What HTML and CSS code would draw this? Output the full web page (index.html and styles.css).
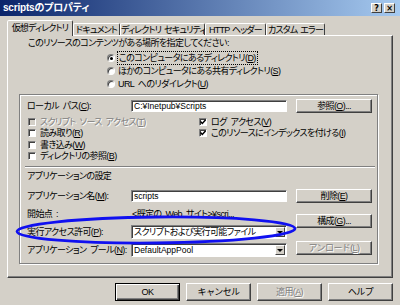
FILE: index.html
```html
<!DOCTYPE html>
<html lang="ja">
<head>
  <meta charset="UTF-8">
  <title>scriptsのプロパティ</title>
  <link rel="stylesheet" href="styles.css">
</head>
<body>

<!-- Title bar -->
<div class="titlebar">
  <span class="title">scriptsのプロパティ</span>
  <div class="caption-btns">
    <span class="cap-btn">?</span>
    <span class="cap-btn">×</span>
  </div>
</div>

<!-- Tabs -->
<div class="tabs">
  <div class="tab active">仮想ディレクトリ</div>
  <div class="tab">ドキュメント</div>
  <div class="tab">ディレクトリ セキュリティ</div>
  <div class="tab">HTTP ヘッダー</div>
  <div class="tab">カスタム エラー</div>
</div>

<div class="panel">
  <div class="intro">このリソースのコンテンツがある場所を指定してください:</div>
  <div class="radios">
    <div class="radio-row"><span class="radio checked"></span><span class="focus">このコンピュータにあるディレクトリ(<u>D</u>)</span></div>
    <div class="radio-row"><span class="radio"></span><span>ほかのコンピュータにある共有ディレクトリ(<u>S</u>)</span></div>
    <div class="radio-row"><span class="radio"></span><span>URL へのリダイレクト(<u>U</u>)</span></div>
  </div>

  <div class="group">
    <div class="path-row">
      <span class="label">ローカル パス(<u>C</u>):</span>
      <div class="textbox">C:¥Inetpub¥Scripts</div>
      <button class="btn">参照(<u>O</u>)...</button>
    </div>

    <div class="checks">
      <div class="check-col">
        <div class="check-row disabled"><span class="checkbox"></span>スクリプト ソース アクセス(<u>T</u>)</div>
        <div class="check-row"><span class="checkbox"></span>読み取り(<u>R</u>)</div>
        <div class="check-row"><span class="checkbox"></span>書き込み(<u>W</u>)</div>
        <div class="check-row"><span class="checkbox"></span>ディレクトリの参照(<u>B</u>)</div>
      </div>
      <div class="check-col">
        <div class="check-row"><span class="checkbox checked"><svg width="6" height="6" viewBox="0 0 6 6"><path d="M0.5 2.5 L2.3 4.5 L5.6 0.8" fill="none" stroke="#000" stroke-width="1.4"/></svg></span>ログ アクセス(<u>V</u>)</div>
        <div class="check-row"><span class="checkbox checked"><svg width="6" height="6" viewBox="0 0 6 6"><path d="M0.5 2.5 L2.3 4.5 L5.6 0.8" fill="none" stroke="#000" stroke-width="1.4"/></svg></span>このリソースにインデックスを付ける(<u>I</u>)</div>
      </div>
    </div>

    <div class="separator"></div>
    <div class="section-title">アプリケーションの設定</div>

    <div class="app-settings">
      <div class="app-fields">
        <span class="label">アプリケーション名(<u>M</u>):</span>
        <div class="textbox">scripts</div>
        <span class="label">開始点 :</span>
        <span class="value">&lt;既定の Web サイト&gt;¥scri...</span>
        <span class="label">実行アクセス許可(<u>P</u>):</span>
        <div class="select"><span class="select-text jp">スクリプトおよび実行可能ファイル</span><span class="arrow"></span></div>
        <span class="label">アプリケーション プール(<u>N</u>):</span>
        <div class="select"><span class="select-text">DefaultAppPool</span><span class="arrow"></span></div>
      </div>
      <div class="app-buttons">
        <button class="btn">削除(<u>E</u>)</button>
        <button class="btn">構成(<u>G</u>)...</button>
        <button class="btn" disabled>アンロード(<u>L</u>)</button>
      </div>
    </div>
  </div>
</div>

<!-- Dialog buttons -->
<div class="footer">
  <button class="btn default">OK</button>
  <button class="btn">キャンセル</button>
  <button class="btn" disabled>適用(<u>A</u>)</button>
  <button class="btn">ヘルプ</button>
</div>

<!-- Hand-drawn highlight -->
<svg class="annotation" width="400" height="305" viewBox="0 0 400 305">
  <ellipse cx="156" cy="230" rx="139" ry="13" fill="none" stroke="#1010f0" stroke-width="2.8" transform="rotate(-0.6 156 230)"/>
</svg>

</body>
</html>
```

FILE: styles.css
```css
* {
  box-sizing: border-box;
}

body {
  margin: 0;
  width: 400px;
  height: 305px;
  overflow: hidden;
  position: relative;
  background-color: #d4d0c8;
  font-family: "Liberation Sans", "Noto Sans CJK JP", sans-serif;
  font-size: 9px;
  line-height: 12px;
  letter-spacing: -0.6px;
  word-spacing: 2px;
  font-feature-settings: "palt";
  color: #000;
}

u {
  text-decoration: underline;
  text-underline-offset: 1px;
}

/* title bar */
.titlebar {
  height: 16px;
  display: flex;
  align-items: center;
  justify-content: space-between;
  padding: 0 5px 0 3px;
  background: linear-gradient(to right, #0a246a, #a6caf0);
}

.title {
  color: #fff;
  font-weight: bold;
  font-size: 10px;
  letter-spacing: -0.2px;
}

.caption-btns {
  display: flex;
  gap: 2px;
}

.cap-btn {
  width: 11px;
  height: 10px;
  display: flex;
  align-items: center;
  justify-content: center;
  background-color: #d4d0c8;
  border: 1px solid;
  border-color: #fff #404040 #404040 #fff;
  font: bold 8px "DejaVu Sans", sans-serif;
  letter-spacing: 0;
}

/* tabs */
.tabs {
  display: flex;
  align-items: flex-end;
  height: 19px;
  padding-left: 7px;
  position: relative;
  z-index: 1;
}

.tab {
  height: 12px;
  text-align: center;
  white-space: nowrap;
  letter-spacing: -0.8px;
  word-spacing: 1px;
  border: 1px solid;
  border-bottom: none;
  border-color: #fff #404040 transparent #fff;
  border-radius: 2px 2px 0 0;
}

.tab:nth-child(1) { width: 66px; }
.tab:nth-child(2) { width: 47px; }
.tab:nth-child(3) { width: 85px; }
.tab:nth-child(4) { width: 61px; }
.tab:nth-child(5) { width: 59px; }

.tab.active {
  height: 16px;
  padding-top: 1px;
  margin-bottom: -1px;
  background-color: #d4d0c8;
}

/* tab page */
.panel {
  height: 243px;
  margin: 0 7px;
  padding: 1px 14px 0 11px;
  border: 1px solid;
  border-color: #fff #404040 #404040 #fff;
  box-shadow: inset -1px -1px #808080;
}

.intro {
  margin-left: 9px;
}

.radios {
  margin-top: 2px;
  padding-left: 88px;
}

.radio-row {
  height: 13px;
  display: flex;
  align-items: center;
  white-space: nowrap;
}

.radio {
  width: 8px;
  height: 8px;
  margin-right: 3px;
  border-radius: 50%;
  background-color: #fff;
  border: 1px solid;
  border-color: #808080 #fff #fff #808080;
  box-shadow: inset 1px 1px #404040;
  position: relative;
}

.radio.checked::after {
  content: "";
  position: absolute;
  left: 2px;
  top: 2px;
  width: 3px;
  height: 3px;
  border-radius: 50%;
  background-color: #000;
}

.focus {
  outline: 1px dotted #000;
  outline-offset: 0;
  padding: 0 1px;
}

/* group box */
.group {
  height: 170px;
  margin-top: 4px;
  padding: 4px 5px 0 7px;
  border: 1px solid #808080;
  box-shadow: inset 1px 1px #fff, 1px 1px #fff;
}

.path-row {
  display: grid;
  grid-template-columns: 104px 156px 1fr;
  align-items: center;
  height: 14px;
}

.path-row .btn {
  margin-left: 9px;
}

.label {
  white-space: nowrap;
}

.textbox,
.select {
  height: 12px;
  display: flex;
  align-items: center;
  padding-left: 2px;
  background-color: #fff;
  border: 1px solid;
  border-color: #808080 #fff #fff #808080;
  box-shadow: inset 1px 1px #404040;
  font-size: 8.5px;
  letter-spacing: 0;
  word-spacing: 0;
  white-space: nowrap;
  overflow: hidden;
}

.select {
  height: 14px;
  justify-content: space-between;
  padding-right: 1px;
}

.select-text.jp {
  font-size: 9px;
  letter-spacing: -0.6px;
}

.arrow {
  width: 10px;
  height: 10px;
  display: flex;
  align-items: center;
  justify-content: center;
  background-color: #d4d0c8;
  border: 1px solid;
  border-color: #fff #404040 #404040 #fff;
}

.arrow::after {
  content: "";
  border-left: 3px solid transparent;
  border-right: 3px solid transparent;
  border-top: 3px solid #000;
}

.btn {
  height: 14px;
  padding: 0;
  font-family: inherit;
  font-size: 9px;
  line-height: 12px;
  letter-spacing: -0.6px;
  color: #000;
  background-color: #d4d0c8;
  border: 1px solid;
  border-color: #fff #404040 #404040 #fff;
  box-shadow: inset -1px -1px #808080;
  white-space: nowrap;
}

.btn:disabled {
  color: #808080;
  text-shadow: 1px 1px #fff;
}

/* checkboxes */
.checks {
  display: grid;
  grid-template-columns: 172px 1fr;
  margin-top: 3px;
}

.check-row {
  height: 11.5px;
  display: flex;
  align-items: center;
  white-space: nowrap;
}

.checkbox {
  width: 8px;
  height: 8px;
  margin: 0 4px 0 1px;
  display: flex;
  align-items: center;
  justify-content: center;
  background-color: #fff;
  border: 1px solid;
  border-color: #808080 #fff #fff #808080;
  box-shadow: inset 1px 1px #404040;
}

.check-col:last-child .checkbox {
  margin-left: 0;
}

.check-row.disabled {
  color: #808080;
  text-shadow: 1px 1px #fff;
}

.check-row.disabled .checkbox {
  background-color: #d4d0c8;
}

.separator {
  height: 2px;
  margin: 4px -3px 0 -2px;
  border-top: 1px solid #808080;
  border-bottom: 1px solid #fff;
}

.section-title {
  margin-top: 2px;
}

/* application settings */
.app-settings {
  display: flex;
  margin-top: 7px;
}

.app-fields {
  display: grid;
  grid-template-columns: 104px 156px;
  grid-template-rows: repeat(4, 14px);
  row-gap: 4px;
  align-items: center;
}

.value {
  white-space: nowrap;
  padding-left: 1px;
}

.app-buttons {
  width: 76px;
  margin-left: 9px;
  display: flex;
  flex-direction: column;
}

.app-buttons .btn:nth-child(2) { margin-top: 11px; }
.app-buttons .btn:nth-child(3) { margin-top: 13px; }

/* dialog buttons */
.footer {
  display: flex;
  justify-content: flex-end;
  gap: 6px;
  margin-top: 5px;
  padding-right: 7px;
}

.footer .btn {
  width: 65px;
  height: 18px;
}

.footer .btn.default {
  border: 1px solid #000;
  box-shadow: inset 1px 1px #fff, inset -1px -1px #404040, inset -2px -2px #808080;
}

.annotation {
  position: absolute;
  left: 0;
  top: 0;
  pointer-events: none;
}
```
